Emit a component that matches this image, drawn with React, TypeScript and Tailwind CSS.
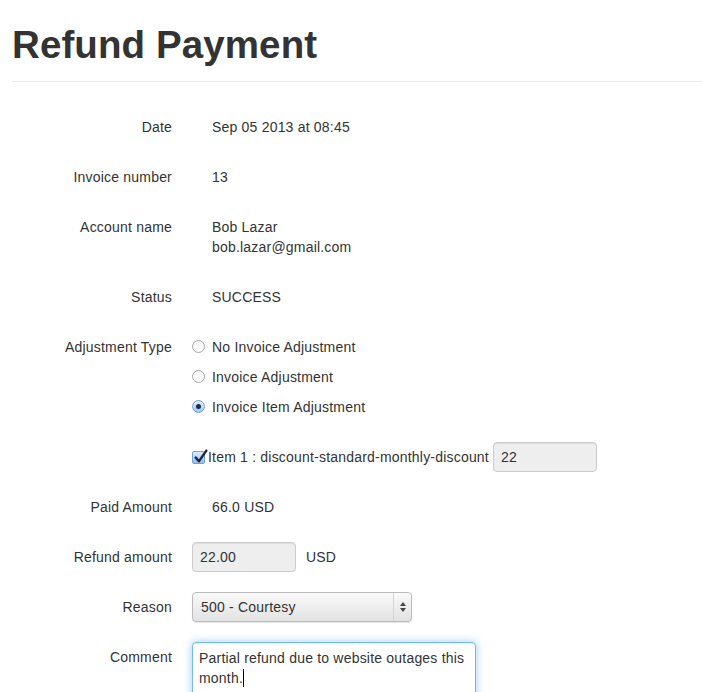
const Radio = ({ checked, label }: { checked?: boolean; label: string }) => (
  <div className="flex items-center h-[30px] pb-[1px]">
    {checked ? (
      <span className="w-[13px] h-[13px] rounded-full border border-[#6f9fd6] bg-gradient-to-b from-[#dcecff] to-[#9cc6f3] flex items-center justify-center shadow-[inset_0_1px_1px_rgba(255,255,255,0.8)]">
        <span className="w-[5px] h-[5px] rounded-full bg-[#1d2d45]" />
      </span>
    ) : (
      <span className="w-[13px] h-[13px] rounded-full border border-[#a8a8a8] bg-gradient-to-b from-[#f2f2f2] to-[#ffffff]" />
    )}
    <span className="ml-[7px]">{label}</span>
  </div>
);

const Row = ({ label, children }: { label: string; children: React.ReactNode }) => (
  <div className="flex mb-5">
    <div className="w-[160px] shrink-0 text-right pt-[5px]">{label}</div>
    <div className="ml-5">{children}</div>
  </div>
);

const inputCls =
  "h-[30px] border border-[#ccc] rounded-[4px] bg-[#eee] px-[7px] flex items-center shadow-[inset_0_1px_1px_rgba(0,0,0,0.075)]";

export default function App() {
  return (
    <div
      className="h-[692px] overflow-hidden bg-white text-[#333] text-[14px] leading-[20px] tracking-[0.2px] pl-3"
      style={{ fontFamily: '"Liberation Sans", Arial, sans-serif' }}
    >
      <div className="border-b border-[#eee] pb-4">
        <h1 className="text-[38.5px] leading-[40px] font-bold pt-[25px] tracking-[0.1px]">Refund Payment</h1>
      </div>

      <div className="mt-[30px]">
        <Row label="Date">
          <div className="pl-5 py-[5px]">Sep 05 2013 at 08:45</div>
        </Row>
        <Row label="Invoice number">
          <div className="pl-5 py-[5px]">13</div>
        </Row>
        <Row label="Account name">
          <div className="pl-5 py-[5px]">
            <div>Bob Lazar</div>
            <div>bob.lazar@gmail.com</div>
          </div>
        </Row>
        <Row label="Status">
          <div className="pl-5 py-[5px]">SUCCESS</div>
        </Row>
        <Row label="Adjustment Type">
          <Radio label="No Invoice Adjustment" />
          <Radio label="Invoice Adjustment" />
          <Radio checked label="Invoice Item Adjustment" />
          <div className="flex items-center mt-5">
            <span className="relative w-[13px] h-[13px] rounded-[2px] border border-[#6f9fd6] bg-gradient-to-b from-[#dcecff] to-[#8fbdf0]">
              <svg viewBox="0 0 14 14" className="absolute -top-[3px] left-[0px] w-[15px] h-[15px]">
                <path d="M2.5 8 L5.5 11.5 L12.5 1.5" fill="none" stroke="#1b2433" strokeWidth="2.2" strokeLinecap="round" strokeLinejoin="round" />
              </svg>
            </span>
            <span className="ml-[3px]">Item 1 : discount-standard-monthly-discount</span>
            <div className={`${inputCls} ml-[4px] w-[104px]`}>22</div>
          </div>
        </Row>
        <Row label="Paid Amount">
          <div className="pl-5 py-[5px]">66.0 USD</div>
        </Row>
        <Row label="Refund amount">
          <div className="flex items-center">
            <div className={`${inputCls} w-[104px]`}>22.00</div>
            <span className="ml-[10px]">USD</span>
          </div>
        </Row>
        <Row label="Reason">
          <div className="flex h-[30px] w-[220px] border border-[#bbb] rounded-[4px] bg-gradient-to-b from-[#fafafa] to-[#e2e2e2] shadow-[0_1px_1px_rgba(0,0,0,0.1)]">
            <div className="flex-1 flex items-center pl-2">500 - Courtesy</div>
            <div className="w-[18px] border-l border-[#d4d4d4] flex flex-col items-center justify-center gap-[2px]">
              <span className="w-0 h-0 border-x-[3px] border-x-transparent border-b-[4px] border-b-[#444]" />
              <span className="w-0 h-0 border-x-[3px] border-x-transparent border-t-[4px] border-t-[#444]" />
            </div>
          </div>
        </Row>
        <Row label="Comment">
          <div className="w-[284px] h-[70px] border border-[rgba(82,168,236,0.8)] rounded-[4px] px-[6px] py-[5px] shadow-[inset_0_1px_1px_rgba(0,0,0,0.075),0_0_8px_rgba(82,168,236,0.6)]">
            Partial refund due to website outages this month.
            <span className="inline-block w-[1px] h-[18px] bg-black align-[-4px]" />
          </div>
        </Row>
      </div>
    </div>
  );
}
